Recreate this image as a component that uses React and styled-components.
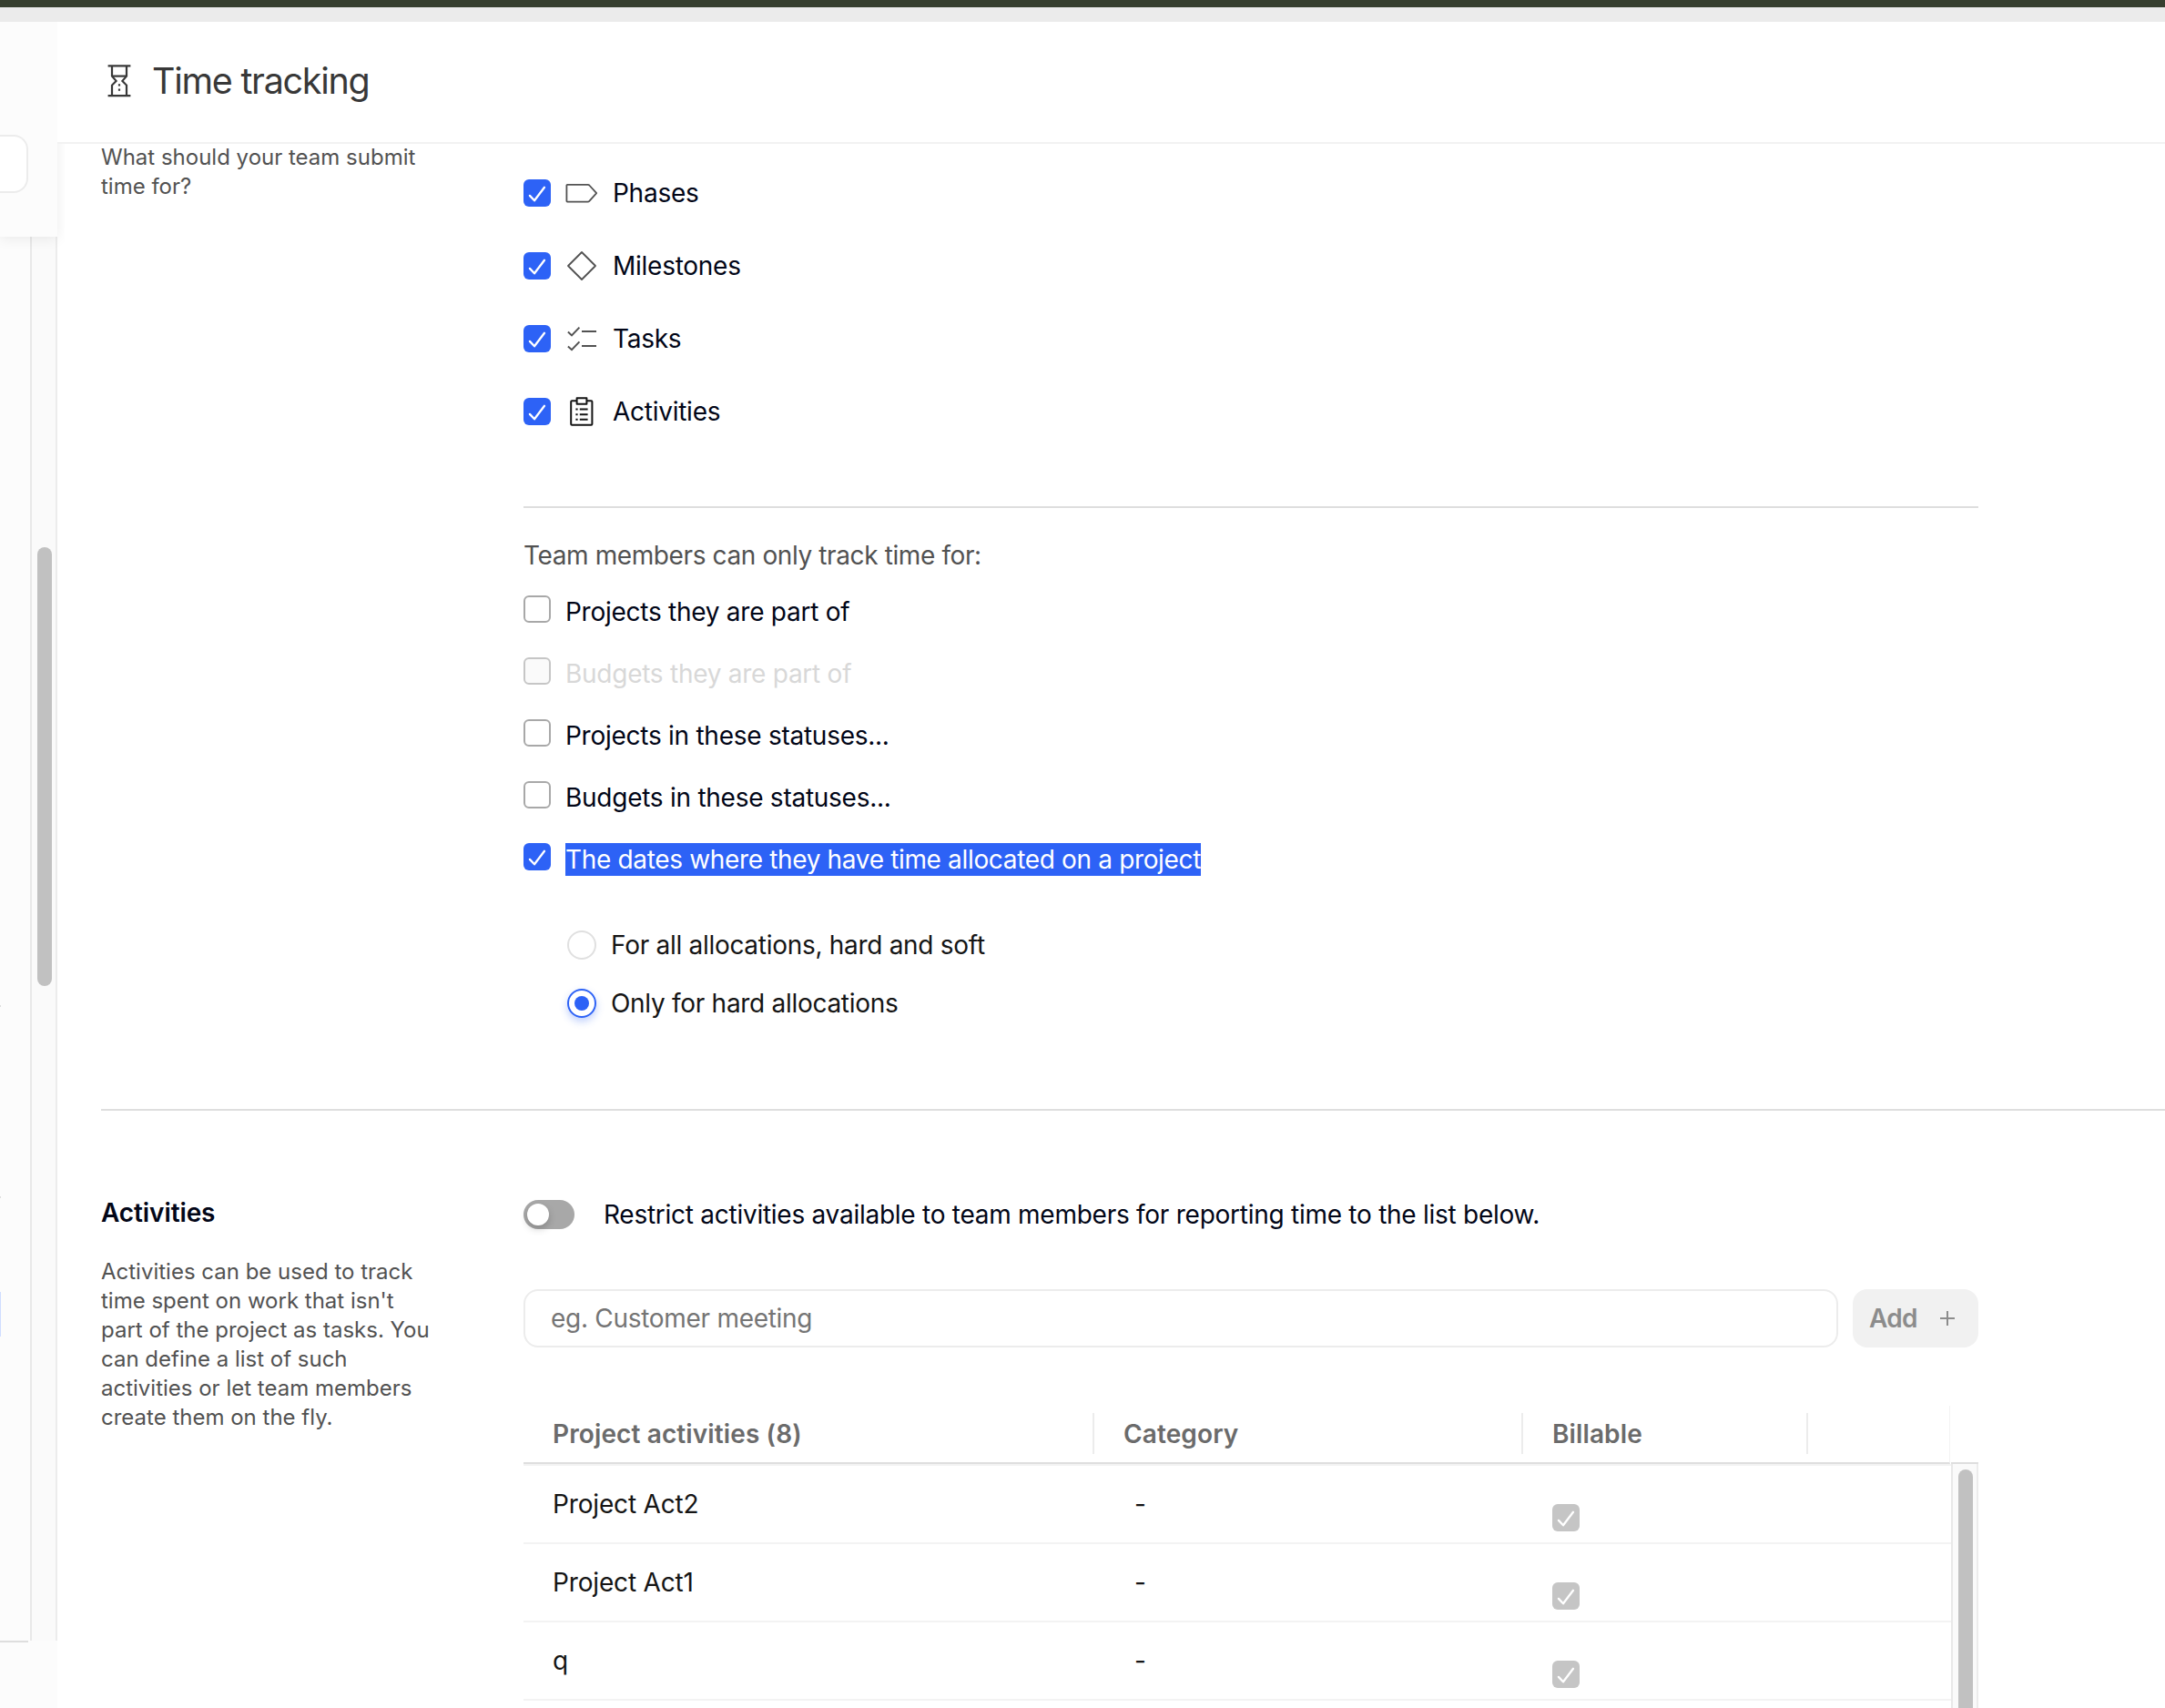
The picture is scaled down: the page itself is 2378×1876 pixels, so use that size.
import styled, { createGlobalStyle, css } from "styled-components";

const colors = {
  blue: "#2d62f6",
  ink: "#020617",
  text: "#151515",
  muted: "#525252",
  placeholder: "#757575",
  line: "#dedede",
  line_soft: "#ececec",
  line_faint: "#f3f3f3",
  panel: "#fcfcfc",
  track: "#fafafa",
  thumb: "#c1c1c1",
};

const GlobalStyle = createGlobalStyle`
  * {
    box-sizing: border-box;
  }

  body {
    margin: 0;
    overflow: hidden;
    background: #fff;
    color: ${colors.ink};
    font-family: "Inter", "Liberation Sans", sans-serif;
    font-size: 28px;
    letter-spacing: -0.26px;
    line-height: 36px;
  }

  h1,
  h2,
  p {
    margin: 0;
  }

  svg {
    display: block;
    flex-shrink: 0;
  }
`;

const Page = styled.div`
  display: flex;
  flex-direction: column;
  height: 1876px;
  overflow: hidden;
`;

const BrowserEdge = styled.div`
  height: 24px;
  flex-shrink: 0;
  background: #ebebeb;
  border-top: 8px solid #363f2f;
`;

const Body = styled.div`
  display: flex;
  flex: 1;
  min-height: 0;
`;

/* ---- sidebar ---- */

const Sidebar = styled.aside`
  width: 63px;
  flex-shrink: 0;
  display: flex;
  flex-direction: column;
  background: ${colors.panel};
`;

const SidebarTop = styled.div`
  height: 236px;
  flex-shrink: 0;
  padding-top: 124px;
  background: ${colors.panel};
  box-shadow: 0 2px 14px rgba(0, 0, 0, 0.08);
  clip-path: inset(0 -8px -20px 0);
  z-index: 1;
`;

const SidebarSearch = styled.div`
  width: 31px;
  height: 64px;
  background: #fff;
  border: 2px solid ${colors.line_soft};
  border-left: 0;
  border-radius: 0 16px 16px 0;
`;

const SidebarScroll = styled.div`
  display: flex;
  height: 1542px;
`;

const SidebarList = styled.div`
  width: 33px;
  padding-top: 844px;
`;

const GroupRule = styled.div`
  width: 1px;
  height: 2px;
  margin-bottom: ${(props) => props.$gap};
  background: ${colors.line};
`;

const ActiveItem = styled.div`
  width: 1px;
  height: 49px;
  background: #cfddff;
`;

const SidebarTrack = styled.div`
  width: 30px;
  padding: 341px 4px 0 6px;
  background: ${colors.track};
  border-left: 2px solid #e8e8e8;
  border-right: 2px solid ${colors.line_soft};
`;

const SidebarThumb = styled.div`
  width: 16px;
  height: 482px;
  border-radius: 8px;
  background: ${colors.thumb};
`;

const SidebarFooterRule = styled.div`
  width: 31px;
  height: 2px;
  background: ${colors.line};
`;

/* ---- main ---- */

const Main = styled.main`
  flex: 1;
  min-width: 0;
`;

const Header = styled.header`
  position: relative;
  z-index: 2;
  display: flex;
  align-items: center;
  gap: 23px;
  height: 134px;
  padding: 0 0 2px 55px;
  background: #fff;
  border-bottom: 2px solid #f2f2f2;
`;

const Title = styled.h1`
  color: #383838;
  font-size: 39.5px;
  font-weight: 400;
  line-height: 48px;
  letter-spacing: -1.28px;
`;

const Section = styled.section`
  display: grid;
  grid-template-columns: 464px 1598px;
  margin-left: 48px;
  height: ${(props) => props.$height};
  border-bottom: ${(props) => (props.$ruled ? `2px solid ${colors.line}` : "0")};
`;

const Aside = styled.div`
  position: relative;
  z-index: 3;
  padding-top: ${(props) => props.$top};
  margin-top: ${(props) => props.$shift || "0"};
`;

const SectionTitle = styled.h2`
  font-size: 28px;
  font-weight: 600;
  line-height: 36px;
  letter-spacing: -0.1px;
  margin-bottom: 31px;
`;

const Description = styled.p`
  width: 370px;
  color: ${colors.muted};
  font-size: 24px;
  line-height: 32px;
  letter-spacing: 0;
`;

const EntityList = styled.div`
  padding-top: 14px;
  padding-bottom: 64px;
  border-bottom: 2px solid ${colors.line};
`;

const EntityRow = styled.div`
  display: flex;
  align-items: center;
  height: 80px;
`;

const EntityIcon = styled.span`
  width: 36px;
  height: 36px;
  margin: 0 16px;
`;

const CheckBox = styled.span`
  display: flex;
  align-items: center;
  justify-content: center;
  width: 30px;
  height: 30px;
  flex-shrink: 0;
  border-radius: 6px;

  ${(props) =>
    props.$checked
      ? css`
          background: ${props.$disabled ? "#c5c5c5" : colors.blue};
        `
      : css`
          background: ${props.$disabled ? "#fafafa" : "#fff"};
          border: 2px solid ${props.$disabled ? "#c6c6c6" : "#a8a8a8"};
        `}
`;

const RestrictionLabel = styled.p`
  margin-top: 34px;
  margin-bottom: 26px;
  color: ${colors.muted};
  letter-spacing: -0.39px;
`;

const RestrictionRow = styled.div`
  display: flex;
  align-items: flex-start;
  gap: 16px;
  height: 68px;
  color: ${(props) => (props.$disabled ? "#d8d8d8" : "inherit")};
`;

const Highlight = styled.span`
  background: ${colors.blue};
  color: #fff;
  letter-spacing: -0.34px;
`;

const RadioGroup = styled.div`
  margin-top: 12px;
  padding-left: 48px;
`;

const RadioRow = styled.div`
  display: flex;
  align-items: center;
  gap: 16px;
  height: 64px;
  color: ${colors.text};
  letter-spacing: -0.29px;
`;

const Radio = styled.span`
  display: flex;
  align-items: center;
  justify-content: center;
  width: 32px;
  height: 32px;
  border-radius: 50%;
  border: 2px solid ${(props) => (props.$checked ? colors.blue : "#e0e0e0")};
  box-shadow: ${(props) => (props.$checked ? "0 4px 8px rgba(45, 98, 246, 0.3)" : "none")};

  &::after {
    content: "";
    width: 16px;
    height: 16px;
    border-radius: 50%;
    background: ${(props) => (props.$checked ? colors.blue : "transparent")};
  }
`;

/* ---- activities ---- */

const ToggleRow = styled.div`
  display: flex;
  align-items: center;
  gap: 32px;
  padding-top: 96px;
  margin-bottom: 64px;
`;

const Toggle = styled.span`
  width: 56px;
  height: 32px;
  padding: 4px;
  border-radius: 16px;
  background: #a8a8a8;

  &::after {
    content: "";
    display: block;
    width: 24px;
    height: 24px;
    border-radius: 50%;
    background: #fff;
    box-shadow: 0 4px 8px rgba(0, 0, 0, 0.2);
  }
`;

const AddRow = styled.div`
  display: flex;
  gap: 16px;
  margin-bottom: 64px;
`;

const Input = styled.input`
  width: 1444px;
  height: 64px;
  padding: 0 28px 1px;
  border: 2px solid ${colors.line_soft};
  border-radius: 16px;
  outline: none;
  background: #fff;
  font-family: inherit;
  font-size: 28px;
  letter-spacing: -0.29px;

  &::placeholder {
    color: ${colors.placeholder};
    opacity: 1;
  }
`;

const AddButton = styled.button`
  display: flex;
  align-items: center;
  gap: 25px;
  width: 138px;
  height: 64px;
  padding: 0 0 0 18px;
  border: 0;
  border-radius: 16px;
  background: #f1f1f1;
  color: #8c8c8c;
  font-family: inherit;
  font-size: 28px;
  font-weight: 600;
  letter-spacing: -0.7px;
`;

const TableHead = styled.div`
  display: flex;
  height: 64px;
  color: #6b6b6b;
  font-weight: 600;
  letter-spacing: 0.12px;
`;

const HeadCells = styled.div`
  display: grid;
  grid-template-columns: 627px 471px 313px 155px;
  width: 1567px;
  padding-top: 8px;
  border-right: 1px solid ${colors.line_faint};
  border-bottom: 2px solid ${colors.line};
`;

const HeadCell = styled.div`
  height: 45px;
  padding: 5px 0 0 32px;
  border-right: ${(props) => (props.$last ? "0" : `2px solid ${colors.line_soft}`)};
`;

const HeadCorner = styled.div`
  width: 30px;
  margin-left: 1px;
  border-bottom: 2px solid ${colors.line};
`;

const TableBody = styled.div`
  display: flex;
  height: 268px;
`;

const Rows = styled.div`
  width: 1568px;
  border-top: 2px solid ${colors.line_faint};
`;

const Row = styled.div`
  display: grid;
  grid-template-columns: 627px 471px 1fr;
  height: 86px;
  border-bottom: 2px solid ${colors.line_faint};
  color: ${colors.text};
  letter-spacing: -0.16px;
`;

const Cell = styled.div`
  padding: ${(props) => props.$pad};
`;

const TableTrack = styled.div`
  width: 30px;
  padding: 6px 4px 0 6px;
  border-left: 2px solid #e8e8e8;
  border-right: 2px solid ${colors.line_soft};
  background: ${colors.track};
`;

const TableThumb = styled.div`
  width: 16px;
  height: 262px;
  border-radius: 8px 8px 0 0;
  background: ${colors.thumb};
`;

const CheckMark = () => (
  <svg
    width="30"
    height="30"
    viewBox="0 0 30 30"
    fill="none"
    stroke="#fff"
    strokeWidth="2.3"
    strokeLinecap="round"
    strokeLinejoin="round"
  >
    <path d="M6.9 17.9 L12 23.3 L23 8.8" />
  </svg>
);

const HourglassIcon = () => (
  <svg width="26" height="36" viewBox="0 0 26 36" fill="none" stroke="#383838" strokeWidth="2.2">
    <path d="M0.6 1.4H25.4M0.6 34.2H25.4" />
    <path d="M5 2V12.6L9.6 17.9L5 22.6V34M21 2V12.6L16.4 17.9L21 22.6V34" />
    <path d="M5 12.6H21" />
    <path d="M11.9 22.4H14.1M11.9 27.6H14.1" />
  </svg>
);

const PhaseIcon = () => (
  <svg width="36" height="36" viewBox="0 0 36 36" fill="none" stroke="#525252" strokeWidth="1.8" strokeLinejoin="round">
    <path d="M2.2 8.8H24.6Q25.6 8.8 26.3 9.5L34.2 18.2L26.3 26.9Q25.6 27.6 24.6 27.6H2.2Q1.4 27.6 1.4 26.8V9.6Q1.4 8.8 2.2 8.8Z" />
  </svg>
);

const MilestoneIcon = () => (
  <svg width="36" height="36" viewBox="0 0 36 36" fill="none" stroke="#525252" strokeWidth="1.8" strokeLinejoin="round">
    <path d="M18 3L33 18L18 33L3 18Z" />
  </svg>
);

const TaskIcon = () => (
  <svg width="36" height="36" viewBox="0 0 36 36" fill="none" stroke="#525252" strokeWidth="2">
    <path d="M2.9 10.6L7 14.4L15.4 5.6M2.9 26.6L7 30.2L15.4 21.4" />
    <path d="M18 10H34M18 26H34" />
  </svg>
);

const ClipboardIcon = () => (
  <svg width="36" height="36" viewBox="0 0 36 36" fill="none" stroke="#151515" strokeWidth="2" strokeLinejoin="round">
    <path d="M12.4 6.2H7.2Q6.2 6.2 6.2 7.2V31.8Q6.2 32.8 7.2 32.8H28.4Q29.4 32.8 29.4 31.8V7.2Q29.4 6.2 28.4 6.2H23.6" />
    <path d="M12.6 3.2H23.4V9.8H12.6Z" />
    <path d="M11.4 15.6H13.6M15.8 15.6H24.6M11.4 21.2H13.6M15.8 21.2H24.6M11.4 26.8H13.6M15.8 26.8H24.6" />
  </svg>
);

const PlusIcon = () => (
  <svg width="16" height="16" viewBox="0 0 16 16" fill="none" stroke="#8c8c8c" strokeWidth="2">
    <path d="M8 0V16M0 8H16" />
  </svg>
);

const entities = [
  { label: "Phases", icon: <PhaseIcon /> },
  { label: "Milestones", icon: <MilestoneIcon /> },
  { label: "Tasks", icon: <TaskIcon /> },
  { label: "Activities", icon: <ClipboardIcon /> },
];

const restrictions = [
  { label: "Projects they are part of" },
  { label: "Budgets they are part of", disabled: true },
  { label: "Projects in these statuses..." },
  { label: "Budgets in these statuses..." },
  { label: "The dates where they have time allocated on a project", checked: true },
];

const activities = ["Project Act2", "Project Act1", "q"];

const SidebarPanel = () => (
  <Sidebar>
    <SidebarTop>
      <SidebarSearch />
    </SidebarTop>
    <SidebarScroll>
      <SidebarList>
        <GroupRule $gap="208px" />
        <GroupRule $gap="103px" />
        <ActiveItem />
      </SidebarList>
      <SidebarTrack>
        <SidebarThumb />
      </SidebarTrack>
    </SidebarScroll>
    <SidebarFooterRule />
  </Sidebar>
);

const SubmitSection = () => (
  <Section $height="1062px" $ruled>
    <Aside $top="0" $shift="-1px">
      <Description>What should your team submit time for?</Description>
    </Aside>

    <div>
      <EntityList>
        {entities.map(({ label, icon }) => (
          <EntityRow key={label}>
            <CheckBox $checked>
              <CheckMark />
            </CheckBox>
            <EntityIcon>{icon}</EntityIcon>
            {label}
          </EntityRow>
        ))}
      </EntityList>

      <RestrictionLabel>Team members can only track time for:</RestrictionLabel>
      {restrictions.map(({ label, checked, disabled }) => (
        <RestrictionRow key={label} $disabled={disabled}>
          <CheckBox $checked={checked} $disabled={disabled}>
            {checked && <CheckMark />}
          </CheckBox>
          {checked ? <Highlight>{label}</Highlight> : label}
        </RestrictionRow>
      ))}

      <RadioGroup>
        <RadioRow>
          <Radio />
          For all allocations, hard and soft
        </RadioRow>
        <RadioRow>
          <Radio $checked />
          Only for hard allocations
        </RadioRow>
      </RadioGroup>
    </div>
  </Section>
);

const ActivitiesSection = () => (
  <Section $height="656px">
    <Aside $top="94px">
      <SectionTitle>Activities</SectionTitle>
      <Description>
        Activities can be used to track time spent on work that isn't part of the
        project as tasks. You can define a list of such activities or let team
        members create them on the fly.
      </Description>
    </Aside>

    <div>
      <ToggleRow>
        <Toggle />
        Restrict activities available to team members for reporting time to the list below.
      </ToggleRow>

      <AddRow>
        <Input type="text" name="activity" placeholder="eg. Customer meeting" />
        <AddButton type="button">
          Add
          <PlusIcon />
        </AddButton>
      </AddRow>

      <TableHead>
        <HeadCells>
          <HeadCell>Project activities (8)</HeadCell>
          <HeadCell>Category</HeadCell>
          <HeadCell>Billable</HeadCell>
          <HeadCell $last />
        </HeadCells>
        <HeadCorner />
      </TableHead>
      <TableBody>
        <Rows>
          {activities.map((name) => (
            <Row key={name}>
              <Cell $pad="24px 0 0 32px">{name}</Cell>
              <Cell $pad="24px 0 0 44px">-</Cell>
              <Cell $pad="42px 0 0 32px">
                <CheckBox $checked $disabled>
                  <CheckMark />
                </CheckBox>
              </Cell>
            </Row>
          ))}
        </Rows>
        <TableTrack>
          <TableThumb />
        </TableTrack>
      </TableBody>
    </div>
  </Section>
);

const App = () => {
  return (
    <>
      <GlobalStyle />
      <Page>
        <BrowserEdge />
        <Body>
          <SidebarPanel />
          <Main>
            <Header>
              <HourglassIcon />
              <Title>Time tracking</Title>
            </Header>
            <SubmitSection />
            <ActivitiesSection />
          </Main>
        </Body>
      </Page>
    </>
  );
};

export default App;
